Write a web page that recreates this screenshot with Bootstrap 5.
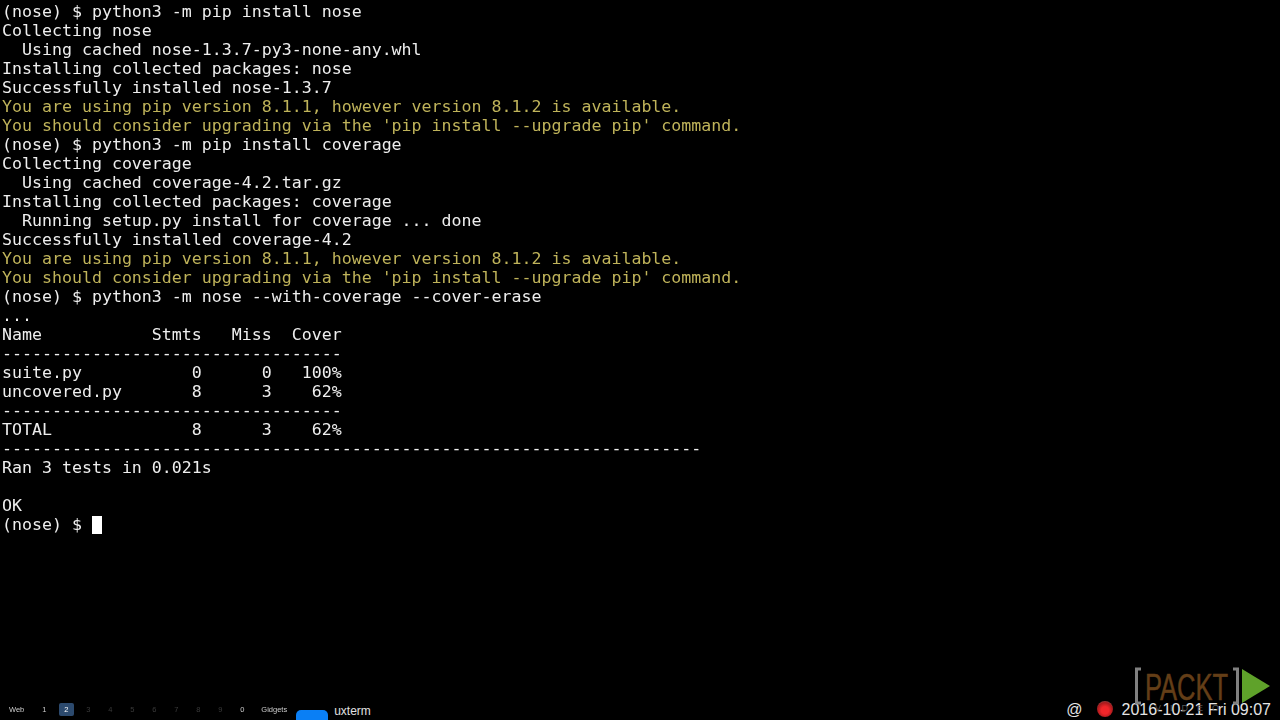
<!DOCTYPE html>
<html lang="en">
<head>
<meta charset="utf-8">
<title>uxterm</title>
<link href="https://cdn.jsdelivr.net/npm/bootstrap@5.3.0/dist/css/bootstrap.min.css" rel="stylesheet">
<style>
html,body{background:#000;height:720px;overflow:hidden;margin:0}
.desk{height:720px;background:#000;position:relative}
.term{font-family:"DejaVu Sans Mono",monospace;font-size:16.6px;line-height:19px;color:#eee;margin:0;padding:2px 0 0 2px;overflow:hidden;white-space:pre;filter:blur(.3px)}
.warn{color:#bfb35a}
.cursor{display:inline-block;width:10px;height:18px;background:#fff;vertical-align:-4px}
.tray{height:20px;font-family:"Liberation Sans",Arial,sans-serif;color:#ddd}
.ws-row{margin-top:3px;padding-left:5px}
.ws{font-size:7.5px;width:22px;text-align:center;line-height:13px;height:13px;color:#ccc;flex:none;filter:blur(.3px)}
.ws.off{color:#3a3a3a}
.ws.word{width:auto}
.ws.one{margin-left:5px}
.ws.cur{width:15px;margin:0 3.5px 0 3.5px;background:#2c4a6e;border-radius:2px;color:#fff}
.ws.gid{margin-left:8px}
.pill{width:32px;height:10px;background:#0a7ff5;border-radius:5px 5px 0 0;margin:10px 6px 0 9px;flex:none}
.tname{font-size:12px;color:#e0e0e0;line-height:14px;margin-top:4px}
.at{font-size:16px;line-height:18px;color:#e4e4e4;margin-top:1px}
.led{width:16px;height:16px;border-radius:50%;background:radial-gradient(circle at 50% 58%,#f0262a 0 30%,#a81a1c 62%,#777 100%);margin:1px 9px 0 14px;flex:none}
.clock{font-size:16px;line-height:18px;color:#e4e4e4;margin:1px 9px 0 0}
.wmark{position:absolute;left:1133px;top:667px;pointer-events:none}
.pk{font-family:"Liberation Sans",Arial,sans-serif;font-size:36px;fill:#643e17;stroke:#643e17;stroke-width:.5}
.vid{font-family:"Liberation Sans",Arial,sans-serif;font-size:9px;fill:#555;letter-spacing:9px}
</style>
</head>
<body>
<div class="desk d-flex flex-column">
<pre class="term flex-grow-1">(nose) $ python3 -m pip install nose
Collecting nose
  Using cached nose-1.3.7-py3-none-any.whl
Installing collected packages: nose
Successfully installed nose-1.3.7
<span class="warn">You are using pip version 8.1.1, however version 8.1.2 is available.</span>
<span class="warn">You should consider upgrading via the 'pip install --upgrade pip' command.</span>
(nose) $ python3 -m pip install coverage
Collecting coverage
  Using cached coverage-4.2.tar.gz
Installing collected packages: coverage
  Running setup.py install for coverage ... done
Successfully installed coverage-4.2
<span class="warn">You are using pip version 8.1.1, however version 8.1.2 is available.</span>
<span class="warn">You should consider upgrading via the 'pip install --upgrade pip' command.</span>
(nose) $ python3 -m nose --with-coverage --cover-erase
...
Name           Stmts   Miss  Cover
----------------------------------
suite.py           0      0   100%
uncovered.py       8      3    62%
----------------------------------
TOTAL              8      3    62%
----------------------------------------------------------------------
Ran 3 tests in 0.021s

OK
(nose) $ <span class="cursor"></span></pre>
<div class="tray d-flex align-items-start flex-shrink-0">
<div class="d-flex ws-row align-items-end">
<div class="ws word px-1">Web</div>
<div class="ws one">1</div>
<div class="ws cur">2</div>
<div class="ws off">3</div>
<div class="ws off">4</div>
<div class="ws off">5</div>
<div class="ws off">6</div>
<div class="ws off">7</div>
<div class="ws off">8</div>
<div class="ws off">9</div>
<div class="ws">0</div>
<div class="ws word gid">Gidgets</div>
</div>
<div class="pill"></div>
<div class="tname">uxterm</div>
<div class="at ms-auto">@</div>
<div class="led"></div>
<div class="clock">2016-10-21 Fri 09:07</div>
</div>
<svg class="wmark" width="140" height="48" viewBox="0 0 140 48">
<path d="M8 2H3.5V36H8" fill="none" stroke="#808080" stroke-width="3"/>
<path d="M100 2H104.5V36H100" fill="none" stroke="#808080" stroke-width="3"/>
<text class="pk" x="12" y="33" textLength="83" lengthAdjust="spacingAndGlyphs">PACKT</text>
<path d="M109 2L137 19L109 36Z" fill="#5fa22a"/>
<text class="vid" x="22" y="44">VIDEO</text>
</svg>
</div>
</body>
</html>
